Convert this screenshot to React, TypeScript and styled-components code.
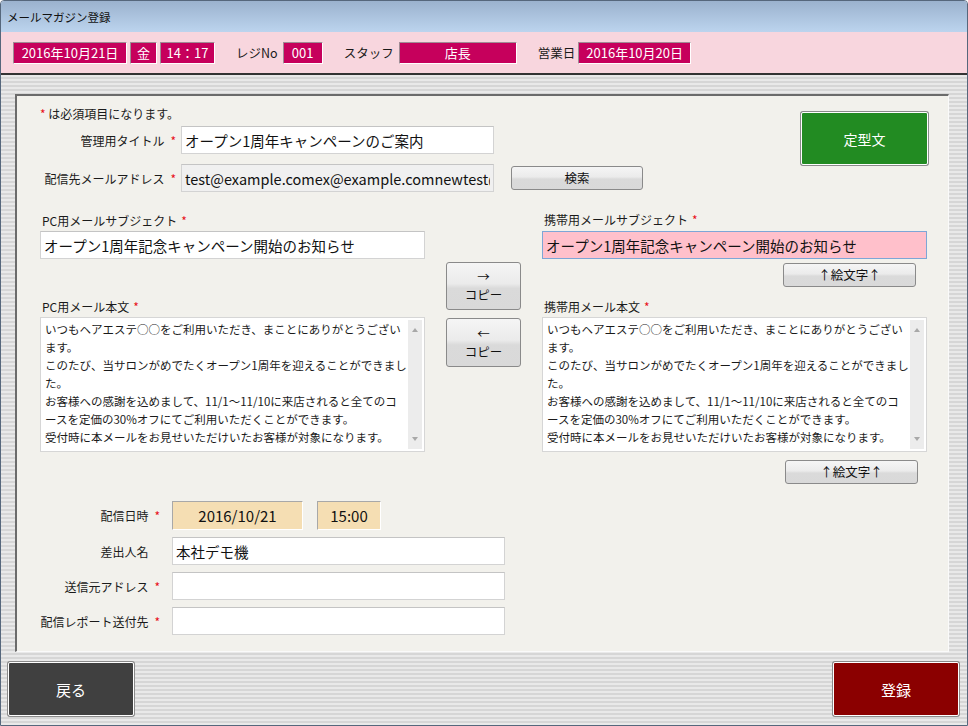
import React from "react";
import styled, { createGlobalStyle } from "styled-components";

const GlobalStyle = createGlobalStyle`
  body {
    margin: 0;
    font-family: "Noto Sans CJK JP", "Noto Sans", sans-serif;
    color: #1a1a1a;
  }
  * {
    box-sizing: border-box;
  }
`;

const Window = styled.div`
  display: flex;
  flex-direction: column;
  width: 968px;
  height: 726px;
  border: 1px solid #56677c;
  border-radius: 4px 4px 0 0;
  overflow: hidden;
`;

const TitleBar = styled.div`
  display: flex;
  align-items: center;
  height: 31px;
  padding-left: 6px;
  background: linear-gradient(#9bb2ce, #bcd4ee);
  font-size: 11.5px;
  color: #111;
`;

const HeaderBar = styled.header`
  display: flex;
  align-items: center;
  gap: 21px;
  height: 43px;
  padding-left: 12px;
  background: #f8d6de;
  border-bottom: 2px solid #333;
  font-size: 12.5px;
`;

const HeaderGroup = styled.div<{ $gap?: number }>`
  display: flex;
  align-items: center;
  gap: ${p => p.$gap ?? 5}px;
`;

const InfoBox = styled.div<{ $w: number }>`
  width: ${p => p.$w}px;
  height: 22px;
  display: flex;
  align-items: center;
  justify-content: center;
  background: #c6005c;
  color: #fff;
  font-size: 13px;
  border: 1px solid;
  border-color: #a08c95 #fff #fff #a08c95;
`;

const Body = styled.div`
  flex: 1;
  display: flex;
  flex-direction: column;
  background: repeating-linear-gradient(
    to bottom,
    #e9e9e9 0 2px,
    #d6d6d6 2px 4px
  );
`;

const Panel = styled.main`
  flex: 1;
  display: flex;
  flex-direction: column;
  margin: 19px 18px 0 14px;
  padding: 10px 20px 0 23px;
  background: #f2f1ec;
  border-top: 2px solid #6b6b6b;
  border-left: 2px solid #6b6b6b;
  border-right: 1px solid #fafafa;
  border-bottom: 1px solid #fafafa;
  font-size: 12px;
`;

const TopSection = styled.section`
  display: flex;
  justify-content: space-between;
  align-items: flex-start;
`;

const TopFields = styled.div`
  display: flex;
  flex-direction: column;
  gap: 10px;
`;

const Note = styled.div`
  height: 16px;
  line-height: 16px;
  margin-bottom: -6px;
`;

const Star = styled.span<{ $hidden?: boolean }>`
  color: #e8101a;
  font-size: 12px;
  visibility: ${p => (p.$hidden ? "hidden" : "visible")};
`;

const FieldRow = styled.div`
  display: flex;
  align-items: center;
`;

const LabelCell = styled.label<{ $w: number; $pad: number }>`
  width: ${p => p.$w}px;
  display: flex;
  justify-content: flex-end;
  align-items: center;
  gap: 6px;
  padding-right: ${p => p.$pad}px;
  white-space: nowrap;
`;

const TextInput = styled.input<{ $w?: number; $tone?: "plain" | "readonly" | "pink" }>`
  width: ${p => (p.$w ? `${p.$w}px` : "100%")};
  height: 28px;
  padding: 0 3px;
  font-family: inherit;
  font-size: 14.5px;
  color: #111;
  border: 1px solid #d3d3d3;
  border-top-color: #c4c4c4;
  background: ${p =>
    p.$tone === "readonly" ? "#f0f0f0" : p.$tone === "pink" ? "#ffc0cb" : "#fff"};
  ${p => p.$tone === "pink" && "border-color: #7da6d6;"}
  outline: none;
`;

const GreyButton = styled.button<{ $w: number; $h?: number }>`
  width: ${p => p.$w}px;
  height: ${p => p.$h ?? 24}px;
  padding: 0;
  font-family: inherit;
  font-size: 12.5px;
  line-height: 18px;
  color: #111;
  border: 1px solid #8a8a8a;
  border-radius: 3px;
  background: linear-gradient(#f5f5f5, #ebebeb 45%, #dadada 55%, #d9d9d9);
`;

const SearchButton = styled(GreyButton)`
  margin-left: 17px;
`;

const TemplateButton = styled.button`
  width: 127px;
  height: 53px;
  margin-top: 6px;
  font-family: inherit;
  font-size: 14px;
  color: #fff;
  background: #228b22;
  border: 1px solid #fff;
  border-radius: 2px;
  box-shadow: 0 0 0 1px #8a8a8a;
`;

const MailGrid = styled.section`
  display: grid;
  grid-template-columns: 385px 75px 385px;
  grid-template-rows: 22px 28px 36px 22px 135px 32px;
  column-gap: 21px;
  margin-top: 17px;
`;

const ColLabel = styled.div<{ $col: number; $row: number; $drop?: number }>`
  grid-column: ${p => p.$col};
  grid-row: ${p => p.$row};
  align-self: end;
  padding-bottom: ${p => 4 - (p.$drop ?? 0)}px;
  padding-left: 2px;
  display: flex;
  gap: 4px;
`;

const GridCell = styled.div<{ $col: number; $row: number }>`
  grid-column: ${p => p.$col};
  grid-row: ${p => p.$row};
`;

const CopyStack = styled.div`
  grid-column: 2;
  grid-row: 3 / 6;
  display: flex;
  flex-direction: column;
  gap: 8px;
  padding-top: 3px;
`;

const EmojiCell = styled.div<{ $row: number; $top: number; $right: number }>`
  grid-column: 3;
  grid-row: ${p => p.$row};
  display: flex;
  justify-content: flex-end;
  align-items: flex-start;
  padding-top: ${p => p.$top}px;
  padding-right: ${p => p.$right}px;
`;

const MailBox = styled.div<{ $col: number }>`
  grid-column: ${p => p.$col};
  grid-row: 5;
  position: relative;
`;

const MailBody = styled.textarea`
  width: 100%;
  height: 100%;
  resize: none;
  padding: 2px 18px 2px 4px;
  font-family: inherit;
  font-size: 11.5px;
  line-height: 18px;
  color: #1a1a1a;
  background: #fff;
  border: 1px solid #d6d6d6;
  overflow: hidden;
  white-space: pre;
  outline: none;
`;

/* the textarea's vertical scrollbar, drawn over its right edge */
const ScrollTrack = styled.div`
  position: absolute;
  top: 3px;
  right: 3px;
  bottom: 3px;
  width: 14px;
  background: #ececec;
  pointer-events: none;

  &::before,
  &::after {
    content: "";
    position: absolute;
    left: 4px;
    border-left: 3px solid transparent;
    border-right: 3px solid transparent;
  }
  &::before {
    top: 8px;
    border-bottom: 4px solid #a8a8a8;
  }
  &::after {
    bottom: 8px;
    border-top: 4px solid #a8a8a8;
  }
`;

const SendSection = styled.section`
  display: flex;
  flex-direction: column;
  gap: 7px;
  margin-top: 17px;
`;

const SlotBox = styled.div<{ $w: number }>`
  width: ${p => p.$w}px;
  height: 29px;
  display: flex;
  align-items: center;
  justify-content: center;
  background: #f5deb3;
  border-top: 1px solid #a8a8a8;
  border-left: 1px solid #a8a8a8;
  border-right: 1px solid #fff;
  border-bottom: 1px solid #fff;
  font-size: 15px;
  color: #111;
`;

const SlotGap = styled.div`
  width: 14px;
`;

const Footer = styled.footer`
  display: flex;
  justify-content: space-between;
  height: 73px;
  padding: 10px 8px 0 7px;
`;

const BigButton = styled.button<{ $bg: string }>`
  width: 126px;
  height: 54px;
  font-family: inherit;
  font-size: 15px;
  color: #fff;
  background: ${p => p.$bg};
  border: 1px solid #fff;
  border-radius: 2px;
  box-shadow: 0 0 0 1px #8a8a8a;
`;

const bodyText = [
  "いつもヘアエステ○○をご利用いただき、まことにありがとうござい",
  "ます。",
  "このたび、当サロンがめでたくオープン1周年を迎えることができまし",
  "た。",
  "お客様への感謝を込めまして、11/1～11/10に来店されると全てのコ",
  "ースを定価の30%オフにてご利用いただくことができます。",
  "受付時に本メールをお見せいただけいたお客様が対象になります。"
].join("\n");

const subject = "オープン1周年記念キャンペーン開始のお知らせ";

const App = () => {
  return (
    <>
      <GlobalStyle />
      <Window>
        <TitleBar>メールマガジン登録</TitleBar>
        <HeaderBar>
          <HeaderGroup $gap={3}>
            <InfoBox $w={114}>2016年10月21日</InfoBox>
            <InfoBox $w={27}>金</InfoBox>
            <InfoBox $w={55}>14：17</InfoBox>
          </HeaderGroup>
          <HeaderGroup>
            <span>レジNo</span>
            <InfoBox $w={40}>001</InfoBox>
          </HeaderGroup>
          <HeaderGroup>
            <span>スタッフ</span>
            <InfoBox $w={118}>店長</InfoBox>
          </HeaderGroup>
          <HeaderGroup $gap={3}>
            <span>営業日</span>
            <InfoBox $w={113}>2016年10月20日</InfoBox>
          </HeaderGroup>
        </HeaderBar>

        <Body>
          <Panel>
            <TopSection>
              <TopFields>
                <Note>
                  <Star>*</Star> は必須項目になります。
                </Note>
                <FieldRow>
                  <LabelCell $w={141} $pad={5}>
                    管理用タイトル <Star>*</Star>
                  </LabelCell>
                  <TextInput $w={313} defaultValue="オープン1周年キャンペーンのご案内" />
                </FieldRow>
                <FieldRow>
                  <LabelCell $w={141} $pad={5}>
                    配信先メールアドレス <Star>*</Star>
                  </LabelCell>
                  <TextInput
                    $w={313}
                    $tone="readonly"
                    readOnly
                    defaultValue="test@example.comex@example.comnewtest@example.com"
                  />
                  <SearchButton $w={132}>検索</SearchButton>
                </FieldRow>
              </TopFields>
              <TemplateButton>定型文</TemplateButton>
            </TopSection>

            <MailGrid>
              <ColLabel $col={1} $row={1} $drop={2}>
                PC用メールサブジェクト<Star>*</Star>
              </ColLabel>
              <GridCell $col={1} $row={2}>
                <TextInput defaultValue={subject} />
              </GridCell>
              <ColLabel $col={3} $row={1} $drop={1}>
                携帯用メールサブジェクト<Star>*</Star>
              </ColLabel>
              <GridCell $col={3} $row={2}>
                <TextInput $tone="pink" defaultValue={subject} />
              </GridCell>
              <EmojiCell $row={3} $top={4} $right={11}>
                <GreyButton $w={133}>↑絵文字↑</GreyButton>
              </EmojiCell>

              <CopyStack>
                <GreyButton $w={75} $h={48}>
                  →
                  <br />
                  コピー
                </GreyButton>
                <GreyButton $w={75} $h={49}>
                  ←
                  <br />
                  コピー
                </GreyButton>
              </CopyStack>

              <ColLabel $col={1} $row={4} $drop={2}>
                PC用メール本文 <Star>*</Star>
              </ColLabel>
              <MailBox $col={1}>
                <MailBody wrap="off" defaultValue={bodyText} />
                <ScrollTrack />
              </MailBox>
              <ColLabel $col={3} $row={4} $drop={2}>
                携帯用メール本文 <Star>*</Star>
              </ColLabel>
              <MailBox $col={3}>
                <MailBody wrap="off" defaultValue={bodyText} />
                <ScrollTrack />
              </MailBox>
              <EmojiCell $row={6} $top={8} $right={9}>
                <GreyButton $w={133}>↑絵文字↑</GreyButton>
              </EmojiCell>
            </MailGrid>

            <SendSection>
              <FieldRow>
                <LabelCell $w={132} $pad={12}>
                  配信日時 <Star>*</Star>
                </LabelCell>
                <SlotBox $w={131}>2016/10/21</SlotBox>
                <SlotGap />
                <SlotBox $w={64}>15:00</SlotBox>
              </FieldRow>
              <FieldRow>
                <LabelCell $w={132} $pad={12}>
                  差出人名 <Star $hidden>*</Star>
                </LabelCell>
                <TextInput $w={333} defaultValue="本社デモ機" />
              </FieldRow>
              <FieldRow>
                <LabelCell $w={132} $pad={12}>
                  送信元アドレス <Star>*</Star>
                </LabelCell>
                <TextInput $w={333} />
              </FieldRow>
              <FieldRow>
                <LabelCell $w={132} $pad={12}>
                  配信レポート送付先 <Star>*</Star>
                </LabelCell>
                <TextInput $w={333} />
              </FieldRow>
            </SendSection>
          </Panel>

          <Footer>
            <BigButton $bg="#404040">戻る</BigButton>
            <BigButton $bg="#8b0000">登録</BigButton>
          </Footer>
        </Body>
      </Window>
    </>
  );
};

export default App;
